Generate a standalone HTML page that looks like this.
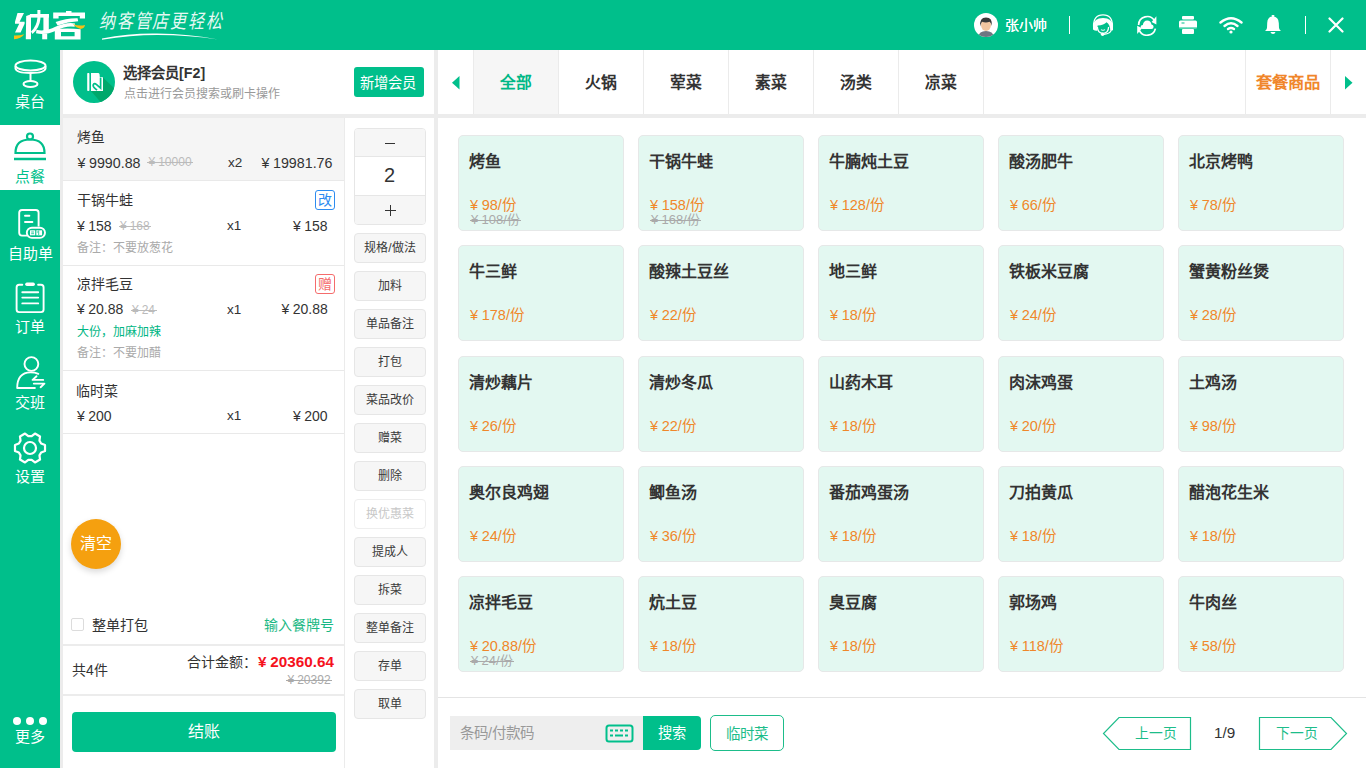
<!DOCTYPE html>
<html lang="zh-CN"><head><meta charset="utf-8">
<style>
*{margin:0;padding:0;box-sizing:border-box}
html,body{width:1366px;height:768px;overflow:hidden;background:#fff;font-family:"Liberation Sans",sans-serif;color:#333;white-space:nowrap}
.abs{position:absolute}
.tx{position:absolute;white-space:nowrap;line-height:1.2}
.yn{margin-right:3.5px}
.tx .yn{margin-right:0.25em}
.st{position:relative;display:inline-block}
.st::after{content:'';position:absolute;left:-1.5px;right:-1.5px;top:50%;height:1px;background:currentColor}
#hdr{position:absolute;left:0;top:0;width:1366px;height:50px;background:#00bf8b}
#side{position:absolute;left:0;top:50px;width:60px;height:718px;background:#00bf8b}
.nav{position:absolute;left:0;width:60px;height:64px;color:#fff;font-size:15px;text-align:center}
.nav .lbl{position:absolute;left:0;width:60px;text-align:center;line-height:16px}
.nav svg{position:absolute}
.b{position:absolute;left:354px;width:72px;height:30px;background:#f6f6f6;border:1px solid #e6e6e6;border-radius:4px;font-size:12px;color:#3a3a3a;text-align:center;line-height:28.5px}
.tab{position:absolute;top:50px;height:64px;width:85px;border-right:1px solid #e8e8e8;font-size:17px;font-weight:bold;color:#333;text-align:center;line-height:64px}
.card{position:absolute;width:166px;height:96px;background:#e3f8f1;border:1px solid #e6e8e8;border-radius:5px}
.card .n{position:absolute;left:11px;top:11px;font-size:16px;font-weight:bold;color:#333;white-space:nowrap;line-height:20px}
.card .pr{position:absolute;left:11px;top:58px;font-size:14px;color:#f0872a;white-space:nowrap;line-height:18px}
.card .op{position:absolute;left:11px;top:76px;font-size:12px;color:#aaa;text-decoration:line-through;white-space:nowrap;line-height:14px}
</style></head><body>

<div id="hdr">
<svg class="abs" style="left:10px;top:5px" width="85" height="40" viewBox="10 5 85 40">
<g fill="#fff">
<path d="M17.5 13 L24 13 L19.6 21.8 L24.6 21.8 L24.6 23.7 L20.6 32.4 L15 32.4 L19.2 23.7 L15 23.7 L15 21.8 Z"/>
<path d="M26.2 16 L31 14.2 L31 39.2 L25.8 39.2 Z"/>
<path d="M30 14 H49 V17.6 H30 Z"/>
<path d="M43.4 14 H48.8 V31 L46 33 H43.4 Z"/>
<path d="M37.4 10 H40.4 V19 Q39.5 28 32.5 34 L31 31.5 Q36.8 26 37.4 18 Z"/>
<path d="M36.5 29.8 Q45 32 56 26.6 Q66 22 75 23.4 L74.6 26.8 Q66 25.4 56.6 30.4 Q45 35.6 36 33.2 Z"/>
<rect x="42.2" y="33.5" width="5" height="5.8"/>
<rect x="66" y="11" width="5.5" height="2.5"/>
<path d="M53.2 12.5 H85 V18.6 H79.8 V16 H58.6 V18.6 H53.2 Z"/>
<path d="M55.6 22 Q66 18 77.6 18.2 L78.2 21.2 Q68 21.8 57.6 25.4 Z"/>
<path d="M54.8 29.3 Q67 27.5 80.6 29.3 V39.5 H54.8 Z M61 32 V36.3 H74.6 V32 Z" fill-rule="evenodd"/>
</g>
<path d="M14 35.6 Q19.5 35.8 24.3 34.2 Q21 38.6 14 39.2 Z" fill="#f5c016"/>
<path d="M72.8 24 Q79 26.6 85 25 Q84.6 28.6 80.5 29 Q76 28 72.8 24 Z" fill="#f5c016"/>
</svg>
<div class="abs" style="left:99px;top:8px;font-size:16px;color:#fff;letter-spacing:1.8px;line-height:22px;font-style:italic;font-family:'Liberation Serif',serif;opacity:0.9;transform:scaleY(1.22);transform-origin:left top">纳客管店更轻松</div>
<svg class="abs" style="left:100px;top:30px" width="122" height="12" viewBox="0 0 122 12"><path d="M2 8.5 Q30 3 57 3.5 Q90 4 118 9.5 Q90 5.2 57 5 Q30 5 2 9.8 Z" fill="#fff"/></svg>
<div class="abs" style="left:974px;top:13px;width:24px;height:24px;border-radius:12px;background:#fff;overflow:hidden">
<svg width="24" height="24"><path d="M4 24 Q5 18 12 18 Q19 18 20 24Z" fill="#6f7682"/><ellipse cx="12" cy="12" rx="5" ry="6" fill="#f3c6a0"/><path d="M6.3 13.5 Q5.2 4.6 12 4.6 Q18.8 4.6 17.7 13 Q17 9.6 15.6 8.8 Q12 10.2 8 8.8 Q6.8 10.5 6.3 13.5Z" fill="#3a3a3a"/></svg></div>
<div class="abs" style="left:1005px;top:15px;font-size:14px;color:#fff;line-height:20px">张小帅</div>
<div class="abs" style="left:1069px;top:16px;width:1px;height:18px;background:#fff"></div>
<div class="abs" style="left:1305px;top:16px;width:1px;height:18px;background:#fff"></div>
<svg class="abs" style="left:1092px;top:14px" width="22" height="22" viewBox="0 0 22 22" fill="none" stroke="#fff" stroke-width="1.3"><path d="M1.6 12.5 Q1.2 0.9 11 0.9 Q20.8 0.9 20.4 12.5"/><path d="M1 12 Q1.8 4 11 4 Q20.2 4 21 12 L21 16 Q19.5 17.2 18.2 16 Q18 10.5 14.5 8.2 Q12 11 5.6 11.6 L5.2 16.8 Q2.8 17 1 15.5 Z" fill="#fff" stroke="none"/><path d="M5.4 13 Q5.6 19.3 11 19.3 Q16.4 19.3 16.6 13"/><path d="M9 15.6 Q11 17 13 15.6" stroke-width="1.1"/><path d="M19.4 15.5 Q18.6 19.8 12 20.3"/><circle cx="10.6" cy="20.2" r="1.7" fill="#fff" stroke="none"/></svg>
<svg class="abs" style="left:1136px;top:14px" width="22" height="22" viewBox="0 0 22 22" fill="none" stroke="#fff" stroke-width="1.7"><path d="M2.6 11 A8.6 8.6 0 0 1 18.6 6.8"/><path d="M20.4 2.3 V10.6 L15.6 8 Z" fill="#fff" stroke="none"/><path d="M19.4 14.6 A8.6 8.6 0 0 1 3.4 16.6"/><path d="M1.2 20 V11.8 L6 14.2 Z" fill="#fff" stroke="none"/><path d="M6.6 15 Q4.6 15 4.6 13 Q4.6 11 6.8 10.9 Q7.6 6.4 11.1 6.4 Q14.8 6.4 15.5 10.5 Q17.6 10.8 17.6 12.8 Q17.6 15 15.4 15 Z" fill="#fff" stroke="none"/></svg>
<svg class="abs" style="left:1178px;top:15px" width="20" height="20" viewBox="0 0 20 20" fill="#fff"><rect x="4" y="1" width="12" height="3.5" rx="1"/><rect x="1" y="5.5" width="18" height="8.5" rx="1.5"/><rect x="4" y="14" width="12" height="5" rx="1"/><rect x="3.5" y="7.5" width="3" height="1" fill="#00bf8b"/><rect x="1" y="12.5" width="18" height="1.2" fill="#00bf8b"/></svg>
<svg class="abs" style="left:1219px;top:16px" width="24" height="18" viewBox="0 0 24 18" fill="none" stroke="#fff" stroke-width="2.4" stroke-linecap="round"><path d="M1.5 6.5 Q12 -2 22.5 6.5"/><path d="M5.5 10 Q12 4.5 18.5 10"/><path d="M9 13 Q12 11 15 13"/><circle cx="12" cy="16" r="1.6" fill="#fff" stroke="none"/></svg>
<svg class="abs" style="left:1264px;top:15px" width="18" height="20" viewBox="0 0 18 20" fill="#fff"><path d="M9 1.5 Q14.5 1.5 14.8 8 L15 13 Q15.5 15 17 16 L1 16 Q2.5 15 3 13 L3.2 8 Q3.5 1.5 9 1.5Z"/><rect x="7.5" y="0" width="3" height="2" rx="1"/><path d="M6.5 17 H11.5 Q11 19 9 19 Q7 19 6.5 17Z"/></svg>
<svg class="abs" style="left:1328px;top:17px" width="16" height="16" viewBox="0 0 16 16" stroke="#fff" stroke-width="2.2" stroke-linecap="round"><path d="M1.5 1.5 L14.5 14.5 M14.5 1.5 L1.5 14.5"/></svg>
</div>

<div id="side">
<div class="abs" style="left:0;top:75px;width:60px;height:65px;background:#fff"></div>
<svg class="abs" style="left:13px;top:9px" width="36" height="30" viewBox="0 0 36 30" fill="none" stroke="#fff" stroke-width="2"><ellipse cx="17.5" cy="6.5" rx="15" ry="5"/><path d="M2.5 7 V9.5 Q3 14 17.5 14 Q32 14 32.5 9.5 V7"/><path d="M17.5 14 V23"/><ellipse cx="17.5" cy="25" rx="7" ry="3"/></svg>
<div class="nav" style="top:42px;height:20px"><div class="lbl" style="top:2px">桌台</div></div>
<svg class="abs" style="left:12px;top:82px" width="36" height="30" viewBox="0 0 36 30" fill="none" stroke="#00bf8b" stroke-width="2.2"><circle cx="18" cy="4.5" r="3"/><path d="M3.5 21 Q3.5 7.5 18 7.5 Q32.5 7.5 32.5 21 Z"/><path d="M2 27 H34" stroke-width="2.5"/></svg>
<div class="nav" style="top:118px;height:20px;color:#00bf8b"><div class="lbl" style="top:1px">点餐</div></div>
<svg class="abs" style="left:17px;top:157px" width="32" height="34" viewBox="0 0 32 34" fill="none" stroke="#fff" stroke-width="1.9"><path d="M10 28.6 H5 Q2.2 28.6 2.2 25.8 V5.8 Q2.2 3 5 3 H18.8 Q21.6 3 21.6 5.8 V19.6"/><path d="M8 8.8 H12.4 M8 15 H15.4" stroke-linecap="round"/><rect x="9.8" y="20.7" width="18.2" height="10.2" rx="5.1"/><g fill="#fff" stroke="none"><rect x="13" y="23.3" width="5.2" height="5"/><rect x="19.3" y="23.3" width="5.8" height="5"/></g><g stroke="#00bf8b" stroke-width="0.8"><path d="M14.2 25 H17 M14.2 26.7 H17 M21.7 23.5 V28 M19.8 25 H21.2"/></g></svg>
<div class="nav" style="top:196px;height:20px"><div class="lbl" style="top:0px">自助单</div></div>
<svg class="abs" style="left:14px;top:231px" width="32" height="34" viewBox="0 0 32 34" fill="none" stroke="#fff" stroke-width="1.9"><path d="M8.3 3.8 H5.2 Q2.6 3.8 2.6 6.5 V28.5 Q2.6 31.1 5.2 31.1 H27 Q29.6 31.1 29.6 28.5 V6.5 Q29.6 3.8 27 3.8 H24.1" stroke-linecap="round"/><rect x="11.2" y="1.6" width="9.7" height="3.3" rx="1.65" fill="#fff" stroke="none"/><path d="M8.3 11.3 H24.2 M8.3 16.6 H24.2 M8.3 22.4 H24.2" stroke-linecap="round"/></svg>
<div class="nav" style="top:268px;height:20px"><div class="lbl" style="top:1px">订单</div></div>
<svg class="abs" style="left:14px;top:305px" width="34" height="34" viewBox="0 0 34 34" fill="none" stroke="#fff" stroke-width="1.9" stroke-linecap="round" stroke-linejoin="round"><circle cx="17.4" cy="9" r="6.9"/><path d="M20.9 33 H3.2 Q3.2 17.6 16.5 17.4 Q21 17.4 24.3 18.8"/><path d="M29.2 24.9 H18.6 L22.5 21.2"/><path d="M19.8 28.6 H30.4 L26.6 32.2"/></svg>
<div class="nav" style="top:344px;height:20px"><div class="lbl" style="top:1px">交班</div></div>
<svg class="abs" style="left:13px;top:381px" width="34" height="34" viewBox="0 0 34 34" fill="none" stroke="#fff" stroke-width="2.2"><path d="M32.02 14.08 L32.02 19.92 L28.13 21.50 L26.46 24.39 L27.04 28.55 L21.98 31.47 L18.67 28.88 L15.33 28.88 L12.02 31.47 L6.96 28.55 L7.54 24.39 L5.87 21.50 L1.98 19.92 L1.98 14.08 L5.87 12.50 L7.54 9.61 L6.96 5.45 L12.02 2.53 L15.33 5.12 L18.67 5.12 L21.98 2.53 L27.04 5.45 L26.46 9.61 L28.13 12.50 L32.02 14.08 Z" stroke-linejoin="round"/><circle cx="17" cy="17" r="6"/></svg>
<div class="nav" style="top:418px;height:20px"><div class="lbl" style="top:1px">设置</div></div>
<svg class="abs" style="left:12px;top:666px" width="36" height="10"><circle cx="5" cy="5" r="4" fill="#fff"/><circle cx="18" cy="5" r="4" fill="#fff"/><circle cx="31" cy="5" r="4" fill="#fff"/></svg>
<div class="nav" style="top:678px;height:20px"><div class="lbl" style="top:1px">更多</div></div>
</div>

<div class="abs" style="left:60px;top:50px;width:3px;height:718px;background:#ececec"></div>
<div class="abs" style="left:434px;top:50px;width:4px;height:718px;background:#ececec"></div>
<div class="abs" style="left:63px;top:114px;width:371px;height:4px;background:#ececec"></div>
<div class="abs" style="left:438px;top:114px;width:928px;height:4px;background:#ececec"></div>
<div class="abs" style="left:73px;top:61px;width:42px;height:42px;border-radius:21px;background:#00bf8b;overflow:hidden">
<svg width="42" height="42" viewBox="1 1 42 42"><path d="M31 17.5 L46 32 L46 46 L32 46 L19 31 L31 31 Z" fill="#00a86b"/><rect x="15.2" y="13" width="2.2" height="18" rx="0.8" fill="#fff"/><path d="M19 13 H26.2 Q27 13 27.5 14 L27.8 17 H30 Q31 17 31 18 V31 H19 Z" fill="#fff"/><path d="M28.6 17.5 V28.2 L24.6 24.6 Q22.4 22.8 21.3 24.6 Q20.6 26.5 23.2 28.6 L25 30.2" stroke="#00bf8b" stroke-width="1.7" fill="none"/></svg></div>
<div class="abs" style="left:354px;top:67px;width:70px;height:30px;border-radius:3px;background:#00bf8b"></div>
<div class="abs" style="left:63px;top:118px;width:281px;height:62px;background:#f5f5f5"></div>
<div class="abs" style="left:63px;top:180px;width:281px;height:1px;background:#e9e9e9"></div>
<div class="abs" style="left:63px;top:265px;width:281px;height:1px;background:#e9e9e9"></div>
<div class="abs" style="left:63px;top:370px;width:281px;height:1px;background:#e9e9e9"></div>
<div class="abs" style="left:63px;top:433px;width:281px;height:1px;background:#e9e9e9"></div>
<div class="abs" style="left:344px;top:118px;width:1px;height:650px;background:#ebebeb"></div>
<div class="abs" style="left:315px;top:190px;width:20px;height:20px;border:1px solid #2d8cf0;border-radius:3px;color:#2d8cf0;font-size:14px;line-height:18px;text-align:center">改</div>
<div class="abs" style="left:315px;top:274px;width:20px;height:20px;border:1px solid #f56c6c;border-radius:3px;color:#f56c6c;font-size:14px;line-height:18px;text-align:center">赠</div>
<div class="abs" style="left:71px;top:519px;width:50px;height:50px;border-radius:25px;background:#f5a00f;color:#fff;font-size:16px;line-height:50px;text-align:center;box-shadow:0 3px 6px rgba(0,0,0,0.15)">清空</div>
<div class="abs" style="left:71px;top:618px;width:13px;height:13px;border:1px solid #dcdcdc;border-radius:2px;background:#fff"></div>
<div class="abs" style="left:63px;top:644px;width:281px;height:2px;background:#ececec"></div>
<div class="abs" style="left:63px;top:694px;width:281px;height:2px;background:#ececec"></div>
<div class="abs" style="left:72px;top:712px;width:264px;height:40px;border-radius:4px;background:#00bf8b;color:#fff;font-size:16px;line-height:40px;text-align:center">结账</div>
<div class="abs" style="left:354px;top:128px;width:72px;height:97px;border:1px solid #e6e6e6;border-radius:4px;background:#fff"></div>
<div class="abs" style="left:355px;top:129px;width:70px;height:28px;background:#f6f6f6;border-bottom:1px solid #e6e6e6;border-radius:3px 3px 0 0"></div>
<div class="abs" style="left:355px;top:195px;width:70px;height:29px;background:#f6f6f6;border-top:1px solid #e6e6e6;border-radius:0 0 3px 3px"></div>
<div class="abs" style="left:385px;top:143px;width:10px;height:1px;background:#333"></div>
<div class="abs" style="left:385px;top:210px;width:11px;height:1px;background:#333"></div>
<div class="abs" style="left:390px;top:205px;width:1px;height:11px;background:#333"></div>
<div class="tx" style="left:384px;top:163px;font-size:20px;color:#333">2</div>
<div class="b" style="top:233px;">规格/做法</div>
<div class="b" style="top:271px;">加料</div>
<div class="b" style="top:309px;">单品备注</div>
<div class="b" style="top:347px;">打包</div>
<div class="b" style="top:385px;">菜品改价</div>
<div class="b" style="top:423px;">赠菜</div>
<div class="b" style="top:461px;">删除</div>
<div class="b" style="top:499px;background:#fff;color:#c8c8c8;border-color:#eee;">换优惠菜</div>
<div class="b" style="top:537px;">提成人</div>
<div class="b" style="top:575px;">拆菜</div>
<div class="b" style="top:613px;">整单备注</div>
<div class="b" style="top:651px;">存单</div>
<div class="b" style="top:689px;">取单</div>
<div class="abs" style="left:438px;top:50px;width:928px;height:64px;background:#fff"></div>
<div class="abs" style="left:473px;top:50px;width:85px;height:64px;background:#f6f6f6"></div>
<div class="abs" style="left:473px;top:50px;width:1px;height:64px;background:#ebebeb"></div>
<div class="abs" style="left:558px;top:50px;width:1px;height:64px;background:#ebebeb"></div>
<div class="abs" style="left:643px;top:50px;width:1px;height:64px;background:#ebebeb"></div>
<div class="abs" style="left:728px;top:50px;width:1px;height:64px;background:#ebebeb"></div>
<div class="abs" style="left:813px;top:50px;width:1px;height:64px;background:#ebebeb"></div>
<div class="abs" style="left:898px;top:50px;width:1px;height:64px;background:#ebebeb"></div>
<div class="abs" style="left:983px;top:50px;width:1px;height:64px;background:#ebebeb"></div>
<div class="abs" style="left:1245px;top:50px;width:1px;height:64px;background:#ebebeb"></div>
<div class="abs" style="left:1330px;top:50px;width:1px;height:64px;background:#ebebeb"></div>
<svg class="abs" style="left:452px;top:76px" width="8" height="14"><path d="M7.5 0 V13.5 L0 6.75Z" fill="#00bf8b"/></svg>
<svg class="abs" style="left:1345px;top:76px" width="8" height="14"><path d="M0 0 V13.5 L7.5 6.75Z" fill="#00bf8b"/></svg>
<div class="card" style="left:458px;top:135.00px"></div>
<div class="tx" style="left:469.00px;top:152.00px;font-size:16.00px;color:#333;font-weight:bold">烤鱼</div>
<div class="tx" style="left:470.00px;top:197.00px;font-size:14.50px;color:#f0872a"><span class="yn">¥</span>98/份</div>
<div class="tx" style="left:471.00px;top:212.00px;font-size:13.00px;color:#aaa"><span class="st"><span class="yn">¥</span>108/份</span></div>
<div class="card" style="left:638px;top:135.00px"></div>
<div class="card" style="left:818px;top:135.00px"></div>
<div class="tx" style="left:829.00px;top:152.00px;font-size:16.00px;color:#333;font-weight:bold">牛腩炖土豆</div>
<div class="tx" style="left:830.00px;top:197.00px;font-size:14.50px;color:#f0872a"><span class="yn">¥</span>128/份</div>
<div class="card" style="left:998px;top:135.00px"></div>
<div class="tx" style="left:1009.00px;top:152.00px;font-size:16.00px;color:#333;font-weight:bold">酸汤肥牛</div>
<div class="tx" style="left:1010.00px;top:197.00px;font-size:14.50px;color:#f0872a"><span class="yn">¥</span>66/份</div>
<div class="card" style="left:1178px;top:135.00px"></div>
<div class="tx" style="left:1189.00px;top:152.00px;font-size:16.00px;color:#333;font-weight:bold">北京烤鸭</div>
<div class="tx" style="left:1190.00px;top:197.00px;font-size:14.50px;color:#f0872a"><span class="yn">¥</span>78/份</div>
<div class="card" style="left:458px;top:245.25px"></div>
<div class="tx" style="left:469.00px;top:262.25px;font-size:16.00px;color:#333;font-weight:bold">牛三鲜</div>
<div class="tx" style="left:470.00px;top:307.25px;font-size:14.50px;color:#f0872a"><span class="yn">¥</span>178/份</div>
<div class="card" style="left:638px;top:245.25px"></div>
<div class="tx" style="left:649.00px;top:262.25px;font-size:16.00px;color:#333;font-weight:bold">酸辣土豆丝</div>
<div class="tx" style="left:650.00px;top:307.25px;font-size:14.50px;color:#f0872a"><span class="yn">¥</span>22/份</div>
<div class="card" style="left:818px;top:245.25px"></div>
<div class="tx" style="left:829.00px;top:262.25px;font-size:16.00px;color:#333;font-weight:bold">地三鲜</div>
<div class="tx" style="left:830.00px;top:307.25px;font-size:14.50px;color:#f0872a"><span class="yn">¥</span>18/份</div>
<div class="card" style="left:998px;top:245.25px"></div>
<div class="tx" style="left:1009.00px;top:262.25px;font-size:16.00px;color:#333;font-weight:bold">铁板米豆腐</div>
<div class="tx" style="left:1010.00px;top:307.25px;font-size:14.50px;color:#f0872a"><span class="yn">¥</span>24/份</div>
<div class="card" style="left:1178px;top:245.25px"></div>
<div class="tx" style="left:1189.00px;top:262.25px;font-size:16.00px;color:#333;font-weight:bold">蟹黄粉丝煲</div>
<div class="tx" style="left:1190.00px;top:307.25px;font-size:14.50px;color:#f0872a"><span class="yn">¥</span>28/份</div>
<div class="card" style="left:458px;top:355.50px"></div>
<div class="tx" style="left:469.00px;top:372.50px;font-size:16.00px;color:#333;font-weight:bold">清炒藕片</div>
<div class="tx" style="left:470.00px;top:417.50px;font-size:14.50px;color:#f0872a"><span class="yn">¥</span>26/份</div>
<div class="card" style="left:638px;top:355.50px"></div>
<div class="tx" style="left:649.00px;top:372.50px;font-size:16.00px;color:#333;font-weight:bold">清炒冬瓜</div>
<div class="tx" style="left:650.00px;top:417.50px;font-size:14.50px;color:#f0872a"><span class="yn">¥</span>22/份</div>
<div class="card" style="left:818px;top:355.50px"></div>
<div class="tx" style="left:829.00px;top:372.50px;font-size:16.00px;color:#333;font-weight:bold">山药木耳</div>
<div class="tx" style="left:830.00px;top:417.50px;font-size:14.50px;color:#f0872a"><span class="yn">¥</span>18/份</div>
<div class="card" style="left:998px;top:355.50px"></div>
<div class="tx" style="left:1009.00px;top:372.50px;font-size:16.00px;color:#333;font-weight:bold">肉沫鸡蛋</div>
<div class="tx" style="left:1010.00px;top:417.50px;font-size:14.50px;color:#f0872a"><span class="yn">¥</span>20/份</div>
<div class="card" style="left:1178px;top:355.50px"></div>
<div class="tx" style="left:1189.00px;top:372.50px;font-size:16.00px;color:#333;font-weight:bold">土鸡汤</div>
<div class="tx" style="left:1190.00px;top:417.50px;font-size:14.50px;color:#f0872a"><span class="yn">¥</span>98/份</div>
<div class="card" style="left:458px;top:465.75px"></div>
<div class="tx" style="left:469.00px;top:482.75px;font-size:16.00px;color:#333;font-weight:bold">奥尔良鸡翅</div>
<div class="tx" style="left:470.00px;top:527.75px;font-size:14.50px;color:#f0872a"><span class="yn">¥</span>24/份</div>
<div class="card" style="left:638px;top:465.75px"></div>
<div class="tx" style="left:649.00px;top:482.75px;font-size:16.00px;color:#333;font-weight:bold">鲫鱼汤</div>
<div class="tx" style="left:650.00px;top:527.75px;font-size:14.50px;color:#f0872a"><span class="yn">¥</span>36/份</div>
<div class="card" style="left:818px;top:465.75px"></div>
<div class="tx" style="left:829.00px;top:482.75px;font-size:16.00px;color:#333;font-weight:bold">番茄鸡蛋汤</div>
<div class="tx" style="left:830.00px;top:527.75px;font-size:14.50px;color:#f0872a"><span class="yn">¥</span>18/份</div>
<div class="card" style="left:998px;top:465.75px"></div>
<div class="tx" style="left:1009.00px;top:482.75px;font-size:16.00px;color:#333;font-weight:bold">刀拍黄瓜</div>
<div class="tx" style="left:1010.00px;top:527.75px;font-size:14.50px;color:#f0872a"><span class="yn">¥</span>18/份</div>
<div class="card" style="left:1178px;top:465.75px"></div>
<div class="tx" style="left:1189.00px;top:482.75px;font-size:16.00px;color:#333;font-weight:bold">醋泡花生米</div>
<div class="tx" style="left:1190.00px;top:527.75px;font-size:14.50px;color:#f0872a"><span class="yn">¥</span>18/份</div>
<div class="card" style="left:458px;top:576.00px"></div>
<div class="tx" style="left:469.00px;top:593.00px;font-size:16.00px;color:#333;font-weight:bold">凉拌毛豆</div>
<div class="tx" style="left:470.00px;top:638.00px;font-size:14.50px;color:#f0872a"><span class="yn">¥</span>20.88/份</div>
<div class="tx" style="left:471.00px;top:653.00px;font-size:13.00px;color:#aaa"><span class="st"><span class="yn">¥</span>24/份</span></div>
<div class="card" style="left:638px;top:576.00px"></div>
<div class="tx" style="left:649.00px;top:593.00px;font-size:16.00px;color:#333;font-weight:bold">炕土豆</div>
<div class="tx" style="left:650.00px;top:638.00px;font-size:14.50px;color:#f0872a"><span class="yn">¥</span>18/份</div>
<div class="card" style="left:818px;top:576.00px"></div>
<div class="tx" style="left:829.00px;top:593.00px;font-size:16.00px;color:#333;font-weight:bold">臭豆腐</div>
<div class="tx" style="left:830.00px;top:638.00px;font-size:14.50px;color:#f0872a"><span class="yn">¥</span>18/份</div>
<div class="card" style="left:998px;top:576.00px"></div>
<div class="tx" style="left:1009.00px;top:593.00px;font-size:16.00px;color:#333;font-weight:bold">郭场鸡</div>
<div class="tx" style="left:1010.00px;top:638.00px;font-size:14.50px;color:#f0872a"><span class="yn">¥</span>118/份</div>
<div class="card" style="left:1178px;top:576.00px"></div>
<div class="tx" style="left:1189.00px;top:593.00px;font-size:16.00px;color:#333;font-weight:bold">牛肉丝</div>
<div class="tx" style="left:1190.00px;top:638.00px;font-size:14.50px;color:#f0872a"><span class="yn">¥</span>58/份</div>
<div class="abs" style="left:438px;top:697px;width:928px;height:1px;background:#e4e4e4"></div>
<div class="abs" style="left:450px;top:716px;width:193px;height:34px;background:#eeeeee"></div>
<div class="abs" style="left:643px;top:716px;width:58px;height:34px;background:#00bf8b;border-radius:0 4px 4px 0"></div>
<svg class="abs" style="left:605px;top:724px" width="29" height="19" viewBox="0 0 29 19"><rect x="1.5" y="1.5" width="26" height="16" rx="2.5" fill="none" stroke="#00bf8b" stroke-width="2"/><g fill="#00bf8b"><rect x="5" y="5.5" width="3" height="2"/><rect x="10" y="5.5" width="3" height="2"/><rect x="15" y="5.5" width="3" height="2"/><rect x="20" y="5.5" width="3" height="2"/><rect x="5" y="10.5" width="3" height="2"/><rect x="10" y="10.5" width="8" height="2"/><rect x="20" y="10.5" width="3" height="2"/></g></svg>
<div class="abs" style="left:710px;top:715px;width:74px;height:36px;border:1px solid #1dbd8a;border-radius:5px"></div>
<svg class="abs" style="left:1102px;top:716px" width="248" height="35" viewBox="0 0 248 35" fill="none" stroke="#1dbd8a" stroke-width="1.2"><path d="M17 1.5 H88.5 V33.5 H17 L1.5 17.5 Z"/><path d="M157.5 1.5 H229 L244.5 17.5 L229 33.5 H157.5 Z"/></svg>
<div class="tx" id="uname" style="left:1005.00px;top:16.50px;font-size:14.00px;color:#fff">张小帅</div>
<div class="tx" id="m_t" style="left:123.00px;top:64.50px;font-size:14.25px;font-weight:bold;color:#333">选择会员[F2]</div>
<div class="tx" id="m_s" style="left:123.50px;top:87.00px;font-size:12.00px;color:#999">点击进行会员搜索或刷卡操作</div>
<div class="tx" id="m_btn" style="left:360.00px;top:75.00px;font-size:14.25px;color:#fff">新增会员</div>
<div class="tx" id="i1_t" style="left:76.50px;top:130.00px;font-size:13.75px;color:#333">烤鱼</div>
<div class="tx" id="i1_p" style="left:77.50px;top:154.50px;font-size:14.25px;color:#333"><span class="yn">¥</span>9990.88</div>
<div class="tx" id="i1_o" style="left:148.50px;top:155.00px;font-size:12.00px;color:#bbb;"><span class="st"><span class="yn">¥</span>10000</span></div>
<div class="tx" id="i1_q" style="left:228.00px;top:154.50px;font-size:13.50px;color:#333">x2</div>
<div class="tx" id="i1_s" style="left:261.50px;top:154.50px;font-size:14.25px;color:#333"><span class="yn">¥</span>19981.76</div>
<div class="tx" id="i2_t" style="left:76.50px;top:192.00px;font-size:14.00px;color:#333">干锅牛蛙</div>
<div class="tx" id="i2_p" style="left:77.00px;top:217.50px;font-size:14.00px;color:#333"><span class="yn">¥</span>158</div>
<div class="tx" id="i2_o" style="left:120.00px;top:219.00px;font-size:12.00px;color:#bbb;"><span class="st"><span class="yn">¥</span>168</span></div>
<div class="tx" id="i2_q" style="left:227.00px;top:218.00px;font-size:13.50px;color:#333">x1</div>
<div class="tx" id="i2_s" style="left:293.00px;top:217.50px;font-size:14.00px;color:#333"><span class="yn">¥</span>158</div>
<div class="tx" id="i2_r" style="left:77.00px;top:241.00px;font-size:12.00px;color:#aaa">备注：不要放葱花</div>
<div class="tx" id="i3_t" style="left:76.50px;top:276.00px;font-size:14.00px;color:#333">凉拌毛豆</div>
<div class="tx" id="i3_p" style="left:77.00px;top:301.00px;font-size:14.00px;color:#333"><span class="yn">¥</span>20.88</div>
<div class="tx" id="i3_o" style="left:132.00px;top:303.00px;font-size:12.00px;color:#bbb;"><span class="st"><span class="yn">¥</span>24</span></div>
<div class="tx" id="i3_q" style="left:227.00px;top:302.00px;font-size:13.50px;color:#333">x1</div>
<div class="tx" id="i3_s" style="left:281.50px;top:301.00px;font-size:14.00px;color:#333"><span class="yn">¥</span>20.88</div>
<div class="tx" id="i3_g" style="left:77.00px;top:325.00px;font-size:12.00px;color:#00b684">大份，加麻加辣</div>
<div class="tx" id="i3_r" style="left:77.00px;top:346.00px;font-size:12.00px;color:#aaa">备注：不要加醋</div>
<div class="tx" id="i4_t" style="left:76.00px;top:382.50px;font-size:14.00px;color:#333">临时菜</div>
<div class="tx" id="i4_p" style="left:77.00px;top:407.50px;font-size:14.00px;color:#333"><span class="yn">¥</span>200</div>
<div class="tx" id="i4_q" style="left:227.00px;top:407.50px;font-size:13.50px;color:#333">x1</div>
<div class="tx" id="i4_s" style="left:293.00px;top:407.50px;font-size:14.00px;color:#333"><span class="yn">¥</span>200</div>
<div class="tx" id="pack" style="left:91.50px;top:616.50px;font-size:14.00px;color:#333">整单打包</div>
<div class="tx" id="cardno" style="left:263.50px;top:616.50px;font-size:14.00px;color:#1bb884">输入餐牌号</div>
<div class="tx" id="cnt" style="left:72.00px;top:662.00px;font-size:14.00px;color:#333">共4件</div>
<div class="tx" id="sumlbl" style="left:186.50px;top:654.00px;font-size:14.00px;color:#333">合计金额：</div>
<div class="tx" id="sum" style="left:258.00px;top:652.50px;font-size:15.25px;color:#f5121d;font-weight:bold"><span class="yn">¥</span>20360.64</div>
<div class="tx" id="sumo" style="left:287.50px;top:672.50px;font-size:12.00px;color:#aaa;"><span class="st"><span class="yn">¥</span>20392</span></div>
<div class="tx" id="tab0" style="left:500.00px;top:74.00px;font-size:15.75px;color:#00b886;font-weight:bold">全部</div>
<div class="tx" id="tab1" style="left:585.00px;top:73.50px;font-size:15.75px;color:#333;font-weight:bold">火锅</div>
<div class="tx" id="tab2" style="left:670.00px;top:74.00px;font-size:15.75px;color:#333;font-weight:bold">荤菜</div>
<div class="tx" id="tab3" style="left:755.00px;top:74.00px;font-size:15.75px;color:#333;font-weight:bold">素菜</div>
<div class="tx" id="tab4" style="left:840.00px;top:73.50px;font-size:15.75px;color:#333;font-weight:bold">汤类</div>
<div class="tx" id="tab5" style="left:925.00px;top:74.00px;font-size:15.75px;color:#333;font-weight:bold">凉菜</div>
<div class="tx" id="tab6" style="left:1255.50px;top:73.00px;font-size:16.25px;color:#f0862b;font-weight:bold">套餐商品</div>
<div class="tx" id="ph" style="left:460.00px;top:725.00px;font-size:14.50px;color:#999">条码/付款码</div>
<div class="tx" id="srch" style="left:658.00px;top:725.00px;font-size:14.25px;color:#fff">搜索</div>
<div class="tx" id="tmp" style="left:725.50px;top:726.00px;font-size:14.50px;color:#1dbd8a">临时菜</div>
<div class="tx" id="prev" style="left:1135.00px;top:725.50px;font-size:13.75px;color:#1dbd8a">上一页</div>
<div class="tx" id="pg" style="left:1214.00px;top:724.00px;font-size:15.25px;color:#333">1/9</div>
<div class="tx" id="next" style="left:1276.00px;top:725.50px;font-size:13.75px;color:#1dbd8a">下一页</div>
<div class="tx" id="c1_n" style="left:649.00px;top:152.00px;font-size:16.00px;color:#333;font-weight:bold">干锅牛蛙</div>
<div class="tx" id="c1_p" style="left:650.00px;top:197.00px;font-size:14.50px;color:#f0872a"><span class="yn">¥</span>158/份</div>
<div class="tx" id="c1_o" style="left:651.00px;top:212.00px;font-size:13.00px;color:#aaa"><span class="st"><span class="yn">¥</span>168/份</span></div>
</body></html>
